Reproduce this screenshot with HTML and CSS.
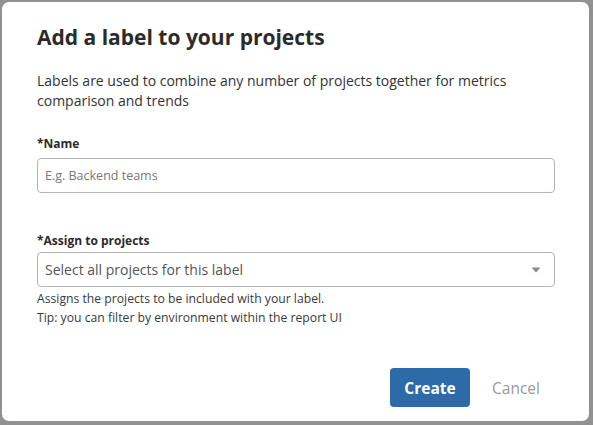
FILE: index.html
```html
<!DOCTYPE html>
<html lang="en">
<head>
<meta charset="utf-8">
<title>Add a label to your projects</title>
<link rel="stylesheet" href="styles.css">
</head>
<body>
<div class="backdrop">
  <div class="modal">
    <h1 class="title">Add a label to your projects</h1>
    <p class="intro">Labels are used to combine any number of projects together for metrics comparison and trends</p>
    <label class="field-label name-label" for="name">*Name</label>
    <input class="text-input" id="name" type="text" placeholder="E.g. Backend teams">
    <label class="field-label assign-label">*Assign to projects</label>
    <div class="select">
      <span class="select-placeholder">Select all projects for this label</span>
      <svg class="select-arrow" width="10" height="6" viewBox="0 0 10 6"><path d="M0.5 0.5 H9.5 L5 5.5 Z" fill="#8a8a8a"/></svg>
    </div>
    <p class="help">Assigns the projects to be included with your label.<br>Tip: you can filter by environment within the report UI</p>
    <div class="actions">
      <button class="btn btn-primary" type="button">Create</button>
      <button class="btn btn-link" type="button">Cancel</button>
    </div>
  </div>
</div>
</body>
</html>
```
FILE: styles.css
```css
* { box-sizing: border-box; }
html, body {
  margin: 0;
  padding: 0;
  width: 593px;
  height: 425px;
  overflow: hidden;
  font-family: "Open Sans", "Noto Sans", sans-serif;
}
.backdrop {
  width: 593px;
  height: 425px;
  background: #919191;
  padding: 2px 4px 4px 2px;
}
.modal {
  width: 587px;
  height: 419px;
  background: #ffffff;
  border-radius: 7px;
  padding: 20px 34px 14px 35px;
  display: flex;
  flex-direction: column;
  align-items: stretch;
}
.title {
  margin: 0;
  font-size: 21px;
  line-height: 30px;
  font-weight: 700;
  color: #2b2b2b;
}
.intro {
  margin: 19px 0 0;
  font-size: 14px;
  line-height: 20px;
  color: #333;
}
.field-label {
  display: block;
  font-size: 12px;
  line-height: 16px;
  font-weight: 700;
  color: #2b2b2b;
}
.name-label { margin-top: 25px; }
.assign-label { margin-top: 40px; }
.text-input {
  margin-top: 6px;
  height: 35px;
  width: 100%;
  border: 1px solid #b4b4b4;
  border-radius: 4px;
  padding: 0 7px;
  font-family: inherit;
  font-size: 12.5px;
  color: #333;
  outline: none;
}
.text-input::placeholder { color: #777; }
.select {
  margin-top: 3px;
  height: 35px;
  border: 1px solid #b4b4b4;
  border-radius: 4px;
  padding: 0 13px 0 7px;
  display: flex;
  align-items: center;
  justify-content: space-between;
}
.select-placeholder {
  font-size: 14px;
  color: #555;
}
.select-arrow { display: block; }
.help {
  margin: 2px 0 0;
  font-size: 12.2px;
  line-height: 19px;
  color: #3a3a3a;
}
.actions {
  margin-top: auto;
  display: flex;
  justify-content: flex-end;
  align-items: center;
  gap: 5px;
}
.btn {
  font-family: inherit;
  height: 39px;
  border: none;
  border-radius: 4px;
  cursor: pointer;
}
.btn-primary {
  width: 80px;
  background: #2c6aa8;
  color: #fff;
  font-weight: 700;
  font-size: 15.5px;
}
.btn-link {
  width: 80px;
  background: transparent;
  color: #9a9a9a;
  font-size: 15.5px;
  padding: 0 0 0 2px;
}
```
